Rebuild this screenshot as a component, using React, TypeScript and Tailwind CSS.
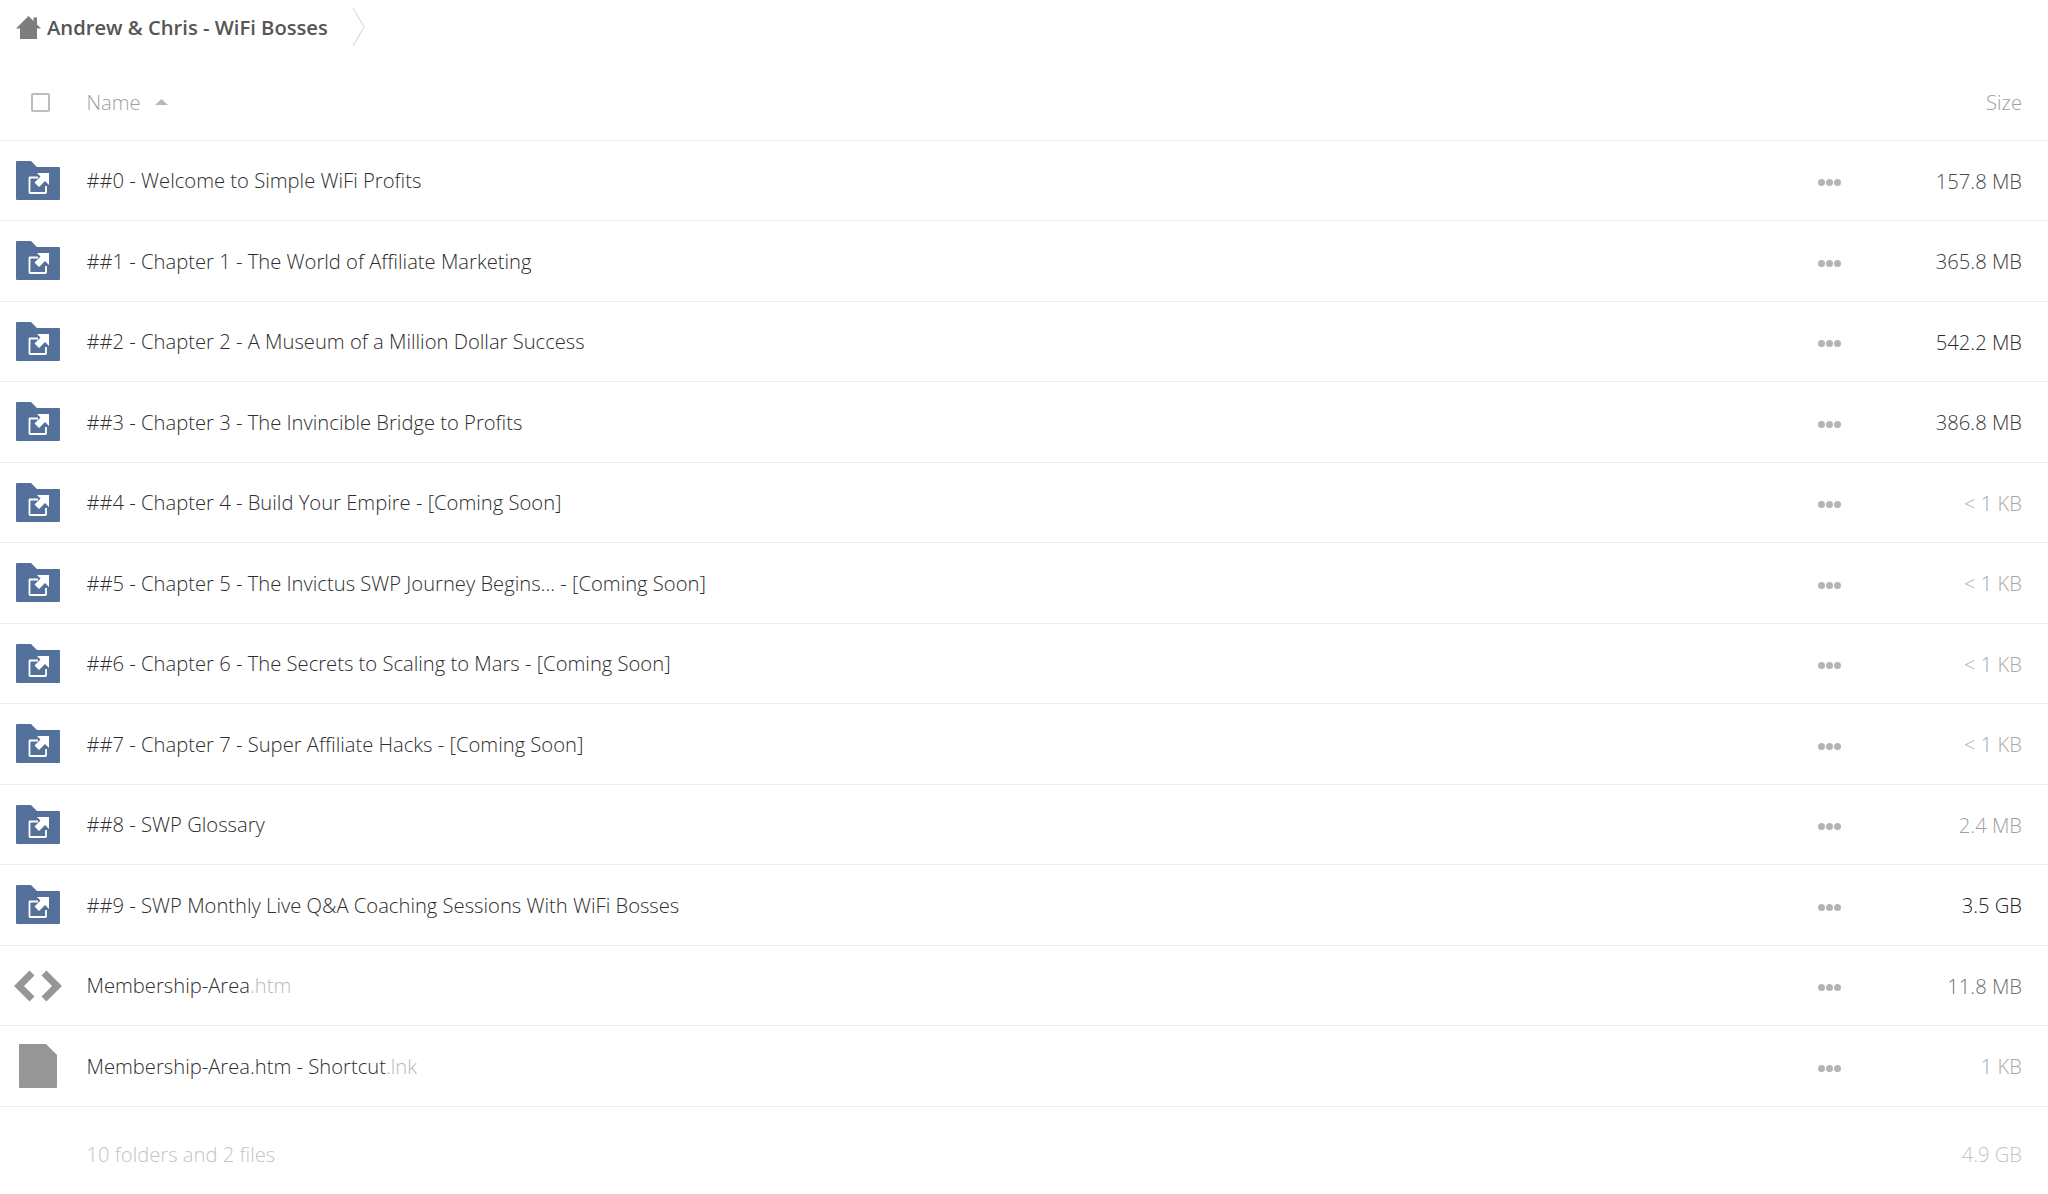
import React from 'react';

type Row = {
  name: string;
  ext?: string;
  size: string;
  sizeClass: string;
  icon: 'folder' | 'code' | 'file';
};

const rows: Row[] = [
  { name: '##0 - Welcome to Simple WiFi Profits', size: '157.8 MB', sizeClass: 'text-[#4a4a4a]', icon: 'folder' },
  { name: '##1 - Chapter 1 - The World of Affiliate Marketing', size: '365.8 MB', sizeClass: 'text-[#3c3c3c]', icon: 'folder' },
  { name: '##2 - Chapter 2 - A Museum of a Million Dollar Success', size: '542.2 MB', sizeClass: 'text-[#2e2e2e]', icon: 'folder' },
  { name: '##3 - Chapter 3 - The Invincible Bridge to Profits', size: '386.8 MB', sizeClass: 'text-[#3a3a3a]', icon: 'folder' },
  { name: '##4 - Chapter 4 - Build Your Empire - [Coming Soon]', size: '< 1 KB', sizeClass: 'text-[#a8a8a8]', icon: 'folder' },
  { name: '##5 - Chapter 5 - The Invictus SWP Journey Begins... - [Coming Soon]', size: '< 1 KB', sizeClass: 'text-[#a8a8a8]', icon: 'folder' },
  { name: '##6 - Chapter 6 - The Secrets to Scaling to Mars - [Coming Soon]', size: '< 1 KB', sizeClass: 'text-[#a8a8a8]', icon: 'folder' },
  { name: '##7 - Chapter 7 - Super Affiliate Hacks - [Coming Soon]', size: '< 1 KB', sizeClass: 'text-[#a8a8a8]', icon: 'folder' },
  { name: '##8 - SWP Glossary', size: '2.4 MB', sizeClass: 'text-[#a0a0a0]', icon: 'folder' },
  { name: '##9 - SWP Monthly Live Q&A Coaching Sessions With WiFi Bosses', size: '3.5 GB', sizeClass: 'text-[#222222]', icon: 'folder' },
  { name: 'Membership-Area', ext: '.htm', size: '11.8 MB', sizeClass: 'text-[#707070]', icon: 'code' },
  { name: 'Membership-Area.htm - Shortcut', ext: '.lnk', size: '1 KB', sizeClass: 'text-[#a8a8a8]', icon: 'file' },
];

function FolderIcon() {
  return (
    <svg width="44" height="39" viewBox="0 0 44 39">
      <path d="M1 0H15L21 6H43a1 1 0 0 1 1 1V38a1 1 0 0 1-1 1H1a1 1 0 0 1-1-1V1a1 1 0 0 1 1-1Z" fill="#53719b" />
      <path d="M22 16.500H14a.5.5 0 0 0-.5.5V31.500a.5.5 0 0 0 .5.5H29.500a.5.5 0 0 0 .5-.5V25" fill="none" stroke="#fff" strokeWidth="1.800" />
      <path d="M33 12V24L29 20L23 26L18.500 21.500L24.500 15.500L21 12Z" fill="#fff" />
    </svg>
  );
}

function CodeIcon() {
  return (
    <svg width="50" height="32" viewBox="0 0 50 32">
      <path d="M19 3L6 16L19 29" fill="none" stroke="#969696" strokeWidth="7" />
      <path d="M31 3L44 16L31 29" fill="none" stroke="#969696" strokeWidth="7" />
    </svg>
  );
}

function FileIcon() {
  return (
    <svg width="38" height="44" viewBox="0 0 38 44">
      <path d="M1 0H27L38 11V43a1 1 0 0 1-1 1H1a1 1 0 0 1-1-1V1a1 1 0 0 1 1-1Z" fill="#969696" />
    </svg>
  );
}

function Dots() {
  return (
    <div className="flex w-[23px] gap-[1px] justify-between mt-[5px]">
      <span className="w-[7px] h-[7px] rounded-full bg-[#b4b4b4]" />
      <span className="w-[7px] h-[7px] rounded-full bg-[#b4b4b4]" />
      <span className="w-[7px] h-[7px] rounded-full bg-[#b4b4b4]" />
    </div>
  );
}

export default function App() {
  return (
    <div className="w-[2048px] h-[1194px] overflow-hidden bg-white text-[20.2px] font-light text-[#222222] font-['Open_Sans',sans-serif]">
      <div className="h-[56px] flex items-center pl-[16px] pb-[2px]">
        <svg width="25" height="23" viewBox="0 0 25 23" className="shrink-0">
          <path d="M12.500 0L17.500 5V1.500H21V8.500L25 12.500H21V23H4V12.500H0Z" fill="#7d7d7d" />
        </svg>
        <span className="ml-[6px] font-semibold text-[#555555] leading-none">Andrew &amp; Chris - WiFi Bosses</span>
        <svg width="13" height="40" viewBox="0 0 13 40" className="ml-[24px]">
          <path d="M1 1L12 20L1 39" fill="none" stroke="#dcdcdc" strokeWidth="1.200" />
        </svg>
      </div>

      <div className="h-[84.5px] flex items-center border-b border-[#ededed] text-[#a0a0a0] pt-[9px]">
        <div className="w-[86.5px] flex justify-start pl-[31px] shrink-0">
          <div className="w-[19px] h-[19px] border-[2px] border-[#bdbdbd] rounded-[2px]" />
        </div>
        <span>Name</span>
        <svg width="13" height="6" viewBox="0 0 13 6" className="ml-[14px]">
          <path d="M6.500 0L13 6H0Z" fill="#b8b8b8" />
        </svg>
        <span className="ml-auto mr-[26px]">Size</span>
      </div>

      {rows.map((r) => (
        <div key={r.name} className="h-[80.5px] flex items-center border-b border-[#ededed]">
          <div className="w-[86.5px] shrink-0 flex items-center pl-[16px]">
            {r.icon === 'folder' && <FolderIcon />}
            {r.icon === 'code' && <div className="-ml-[3px] mt-[1px]"><CodeIcon /></div>}
            {r.icon === 'file' && <div className="ml-[3px]"><FileIcon /></div>}
          </div>
          <div className="flex-1 whitespace-nowrap text-[#2e2e2e]">
            {r.name}
            {r.ext && <span className="text-[#b8b8b8]">{r.ext}</span>}
          </div>
          <Dots />
          <div className={`w-[207px] shrink-0 text-right pr-[26px] mt-[1px] ${r.sizeClass}`}>{r.size}</div>
        </div>
      ))}

      <div className="flex items-center h-[96px] text-[#c4c4c4]">
        <span className="pl-[86.5px]">10 folders and 2 files</span>
        <span className="ml-auto mr-[26px]">4.9 GB</span>
      </div>
    </div>
  );
}
